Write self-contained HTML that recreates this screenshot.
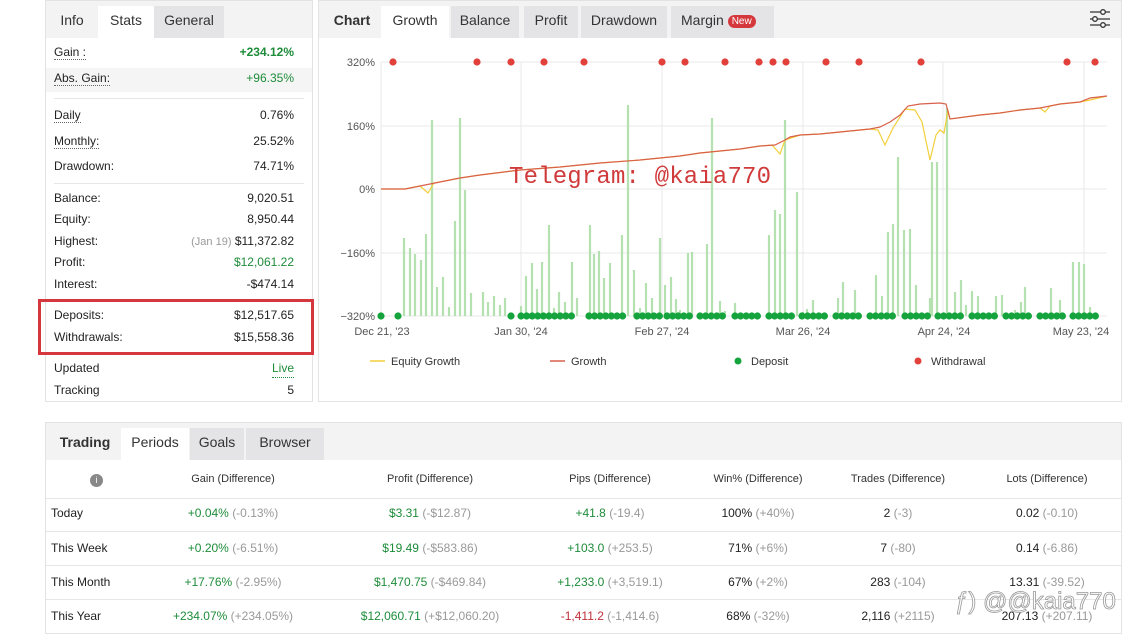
<!DOCTYPE html>
<html><head><meta charset="utf-8"><style>
*{box-sizing:border-box;margin:0;padding:0}
body{width:1125px;height:641px;background:#fff;font-family:"Liberation Sans",Arial,sans-serif;color:#222;position:relative;overflow:hidden}
.abs{position:absolute}
.panel{position:absolute;border:1px solid #e3e3e3;background:#fff}
.tabs{position:absolute;left:0;top:0;right:0;height:37px;background:#f3f3f3}
.tab{position:absolute;top:5px;height:32px;line-height:28px;font-size:14px;text-align:center;color:#333}
.tab.g{background:#e4e3e6}
.tab.w{background:#fff;height:33px}
.row{position:absolute;left:8px;right:8px;font-size:12px;height:18px;line-height:18px}
.row .v{position:absolute;right:10px;top:0}
.dot{border-bottom:1px dotted #666}
.gr{color:#1e8c3a}
.gy{color:#999}
.rd{color:#c0303a}
.hr{position:absolute;left:8px;right:8px;height:1px;background:#e6e6e6}
.c{position:absolute;font-size:12px;text-align:center;width:200px;margin-left:-100px}
.bl{position:absolute;left:0;right:0;height:1px;background:#e6e6e6}
</style></head><body>

<div class="panel" style="left:45px;top:0;width:268px;height:402px">
 <div class="tabs" style="background:#f3f3f3">
  <div class="tab" style="left:0;width:52px">Info</div>
  <div class="tab w" style="left:52px;width:56px">Stats</div>
  <div class="tab g" style="left:108px;width:70px">General</div>
 </div>
 <div class="row" style="top:42px"><span class="dot">Gain :</span><span class="v gr" style="font-weight:bold">+234.12%</span></div>
 <div class="abs" style="left:0;right:0;top:67px;height:24px;background:#f5f5f5"></div>
 <div class="row" style="top:68px"><span class="dot">Abs. Gain:</span><span class="v gr">+96.35%</span></div>
 <div class="hr" style="top:97px"></div>
 <div class="row" style="top:105px"><span class="dot">Daily</span><span class="v">0.76%</span></div>
 <div class="row" style="top:131px"><span class="dot">Monthly:</span><span class="v">25.52%</span></div>
 <div class="row" style="top:156px">Drawdown:<span class="v">74.71%</span></div>
 <div class="hr" style="top:182px"></div>
 <div class="row" style="top:188px">Balance:<span class="v">9,020.51</span></div>
 <div class="row" style="top:209px">Equity:<span class="v">8,950.44</span></div>
 <div class="row" style="top:231px">Highest:<span class="v"><span class="gy" style="font-size:11px">(Jan 19)</span> $11,372.82</span></div>
 <div class="row" style="top:252px">Profit:<span class="v gr">$12,061.22</span></div>
 <div class="row" style="top:274px">Interest:<span class="v">-$474.14</span></div>
 <div class="row" style="top:305px">Deposits:<span class="v">$12,517.65</span></div>
 <div class="row" style="top:327px">Withdrawals:<span class="v">$15,558.36</span></div>
 <div class="row" style="top:358px">Updated<span class="v gr dot" style="border-color:#1e8c3a">Live</span></div>
 <div class="row" style="top:380px">Tracking<span class="v">5</span></div>
</div>
<div class="abs" style="left:38px;top:299px;width:276px;height:56px;border:3px solid #d4383c"></div>

<div class="panel" style="left:318px;top:0;width:804px;height:402px">
 <div class="tabs">
  <div class="tab" style="left:4px;width:58px;font-weight:bold;color:#333">Chart</div>
  <div class="tab w" style="left:62px;width:68px">Growth</div>
  <div class="tab g" style="left:132px;width:68px">Balance</div>
  <div class="tab g" style="left:205px;width:54px">Profit</div>
  <div class="tab g" style="left:262px;width:86px">Drawdown</div>
  <div class="tab g" style="left:352px;width:103px;text-align:left;padding-left:10px">Margin <span style="background:#d4383c;color:#fff;font-size:10px;border-radius:8px;padding:1px 4px;vertical-align:1px">New</span></div>
 </div>
 <svg class="abs" style="left:770px;top:7px" width="22" height="22" viewBox="0 0 22 22" fill="none" stroke="#333" stroke-width="1.3">
  <line x1="1" y1="4" x2="21" y2="4"/><line x1="1" y1="11" x2="21" y2="11"/><line x1="1" y1="17" x2="21" y2="17"/>
  <circle cx="14" cy="4" r="2.3" fill="#fff"/><circle cx="6" cy="11" r="2.3" fill="#fff"/><circle cx="14" cy="17" r="2.3" fill="#fff"/>
 </svg>
</div>

<svg class="abs" style="left:0;top:0" width="1125" height="400" font-family="Liberation Sans, Arial, sans-serif">
 <g stroke="#e8e8e8" stroke-width="1">
  <line x1="381" y1="62" x2="1107" y2="62"/><line x1="381" y1="126" x2="1107" y2="126"/><line x1="381" y1="189" x2="1107" y2="189"/><line x1="381" y1="253" x2="1107" y2="253"/><line x1="381" y1="316" x2="1107" y2="316"/>
  <line x1="381" y1="62" x2="381" y2="316"/><line x1="521" y1="62" x2="521" y2="316"/><line x1="662" y1="62" x2="662" y2="316"/><line x1="803" y1="62" x2="803" y2="316"/><line x1="943" y1="62" x2="943" y2="316"/><line x1="1084" y1="62" x2="1084" y2="316"/>
 </g>
 <g font-size="11" fill="#555" text-anchor="end">
  <text x="375" y="66">320%</text><text x="375" y="130">160%</text><text x="375" y="193">0%</text><text x="375" y="257">−160%</text><text x="375" y="320">−320%</text>
 </g>
 <g font-size="11" fill="#555" text-anchor="middle">
  <text x="382" y="335">Dec 21, '23</text><text x="521" y="335">Jan 30, '24</text><text x="662" y="335">Feb 27, '24</text><text x="803" y="335">Mar 26, '24</text><text x="944" y="335">Apr 24, '24</text><text x="1081" y="335">May 23, '24</text>
 </g>
 <g stroke="#b5e0b0" stroke-width="2.2" id="bars"></g>
 <polyline fill="none" stroke="#f2cf3a" stroke-width="1.2" points="381,189 405,189 420,186 428,193 434,183 460,178 480,175 520,170 560,167 600,163 640,160 680,156 700,153 740,149 760,146 772,145 780,154 785,140 800,135 820,134 840,132 870,129 878,130 885,145 893,128 905,109 915,110 922,122 930,160 936,135 940,130 944,133 948,110 950,119 980,115 1000,113 1020,110 1040,108 1045,112 1050,106 1060,104 1080,102 1090,100 1107,96"/>
 <polyline fill="none" stroke="#d9604a" stroke-width="1.2" points="381,189 405,189 430,184 460,178 480,175 520,170 560,167 600,163 640,160 680,156 700,153 740,149 760,146 775,145 785,140 790,137 800,135 820,134 840,132 870,129 880,127 890,122 900,115 908,106 920,104 940,103 946,104 950,119 980,115 1000,113 1020,110 1040,108 1060,104 1080,102 1090,98 1107,96"/>
 <g fill="#e2403a" id="wd"></g>
 <g fill="#14a33c" id="dp"></g>
 <text x="509" y="183" font-family="Liberation Mono, monospace" font-size="24" fill="#d03a3a" textLength="262">Telegram: @kaia770</text>
 <g font-size="11" fill="#333">
  <line x1="370" y1="361" x2="385" y2="361" stroke="#f2cf3a" stroke-width="1.5"/><text x="391" y="365">Equity Growth</text>
  <line x1="550" y1="361" x2="565" y2="361" stroke="#d9604a" stroke-width="1.5"/><text x="571" y="365">Growth</text>
  <circle cx="738" cy="361" r="3.5" fill="#14a33c"/><text x="751" y="365">Deposit</text>
  <circle cx="918" cy="361" r="3.5" fill="#e2403a"/><text x="931" y="365">Withdrawal</text>
 </g>
</svg>

<div class="panel" style="left:45px;top:422px;width:1077px;height:212px">
 <div class="tabs" style="height:37px">
  <div class="tab" style="left:4px;width:70px;font-weight:bold">Trading</div>
  <div class="tab w" style="left:75px;width:68px">Periods</div>
  <div class="tab g" style="left:144px;width:54px">Goals</div>
  <div class="tab g" style="left:200px;width:78px">Browser</div>
 </div>
 <div class="abs" style="left:44px;top:51px;width:13px;height:13px;border-radius:50%;background:#888;color:#fff;font-size:9px;text-align:center;line-height:13px">i</div>
 <div class="bl" style="top:75px"></div><div class="bl" style="top:108px"></div><div class="bl" style="top:142px"></div><div class="bl" style="top:176px"></div>
</div>
<div id="tbl"></div>
<div class="abs" style="left:955px;top:588px;font-size:24px;color:#fff;-webkit-text-stroke:0.8px #999">ƒ) @@kaia770</div>

<script>
var bars=[[404,238],[410,248],[415,254],[421,260],[426,234],[432,120],[437,287],[443,277],[449,307],[455,221],[460,118],[465,190],[471,293],[483,292],[488,302],[494,296],[500,305],[505,298],[521,306],[526,276],[532,263],[537,289],[542,262],[549,225],[554,308],[559,292],[565,302],[572,262],[577,298],[590,225],[594,254],[599,251],[604,278],[610,263],[622,235],[628,105],[634,270],[640,308],[646,283],[652,298],[660,238],[665,285],[671,277],[676,299],[680,310],[688,253],[692,252],[707,244],[712,118],[720,301],[725,311],[735,303],[769,235],[775,210],[780,214],[785,120],[797,192],[803,312],[807,309],[813,300],[838,298],[843,282],[855,290],[876,275],[882,296],[888,232],[893,224],[898,157],[904,230],[910,229],[916,285],[930,298],[932,162],[937,162],[947,108],[955,292],[961,280],[966,305],[972,291],[978,296],[996,296],[1002,295],[1015,310],[1021,302],[1025,287],[1051,288],[1060,300],[1073,262],[1079,262],[1084,264],[1090,307]];
var ns="http://www.w3.org/2000/svg",g=document.getElementById('bars');
bars.forEach(function(b){var l=document.createElementNS(ns,'line');l.setAttribute('x1',b[0]);l.setAttribute('x2',b[0]);l.setAttribute('y1',b[1]);l.setAttribute('y2',316);g.appendChild(l);});
function dot(id,x,y){var c=document.createElementNS(ns,'circle');c.setAttribute('cx',x);c.setAttribute('cy',y);c.setAttribute('r',3.6);document.getElementById(id).appendChild(c);}
[393,477,511,544,584,662,685,725,759,773,786,826,859,921,1067,1095].forEach(function(x){dot('wd',x,62)});
var runs=[[381,381],[398,398],[511,511],[521,576],[589,628],[637,661],[667,692],[700,723],[735,760],[769,795],[802,828],[836,861],[870,895],[905,930],[938,963],[972,996],[1006,1031],[1040,1065],[1073,1097]];
runs.forEach(function(r){for(var x=r[0];x<=r[1];x+=5.6)dot('dp',x,316)});
var cols=[233,430,610,758,898,1047];
var hdr=["Gain (Difference)","Profit (Difference)","Pips (Difference)","Win% (Difference)","Trades (Difference)","Lots (Difference)"];
var rows=[["Today",[["+0.04%","(-0.13%)","gr"],["$3.31","(-$12.87)","gr"],["+41.8","(-19.4)","gr"],["100%","(+40%)",""],["2","(-3)",""],["0.02","(-0.10)",""]]],
["This Week",[["+0.20%","(-6.51%)","gr"],["$19.49","(-$583.86)","gr"],["+103.0","(+253.5)","gr"],["71%","(+6%)",""],["7","(-80)",""],["0.14","(-6.86)",""]]],
["This Month",[["+17.76%","(-2.95%)","gr"],["$1,470.75","(-$469.84)","gr"],["+1,233.0","(+3,519.1)","gr"],["67%","(+2%)",""],["283","(-104)",""],["13.31","(-39.52)",""]]],
["This Year",[["+234.07%","(+234.05%)","gr"],["$12,060.71","(+$12,060.20)","gr"],["-1,411.2","(-1,414.6)","rd"],["68%","(-32%)",""],["2,116","(+2115)",""],["207.13","(+207.11)",""]]]];
var h="";hdr.forEach(function(t,i){h+='<div class="c" style="left:'+cols[i]+'px;top:473px;color:#333;font-size:11px">'+t+'</div>'});
var ys=[506,541,575,609];
rows.forEach(function(r,j){h+='<div class="abs" style="left:51px;top:'+ys[j]+'px;font-size:12px">'+r[0]+'</div>';
r[1].forEach(function(c,i){h+='<div class="c" style="left:'+cols[i]+'px;top:'+ys[j]+'px"><span class="'+c[2]+'">'+c[0]+'</span> <span class="gy">'+c[1]+'</span></div>'})});
document.getElementById('tbl').innerHTML=h;
</script>
</body></html>
